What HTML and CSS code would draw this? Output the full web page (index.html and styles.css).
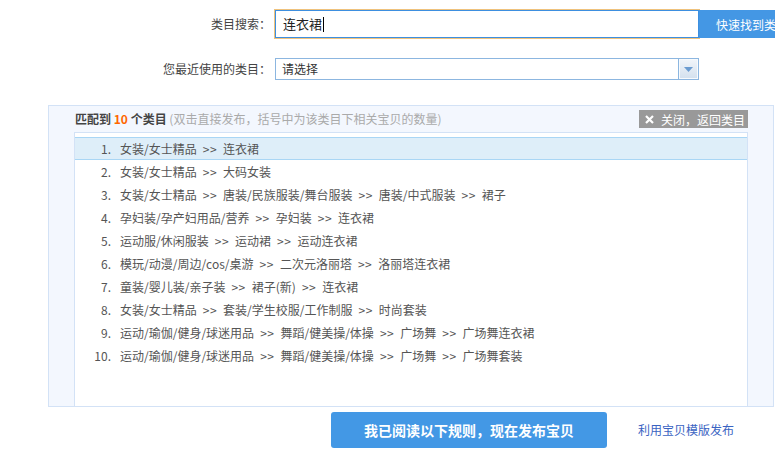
FILE: index.html
```html
<!DOCTYPE html>
<html lang="zh-CN">
<head>
<meta charset="utf-8">
<title>类目搜索</title>
<link rel="stylesheet" href="styles.css">
</head>
<body>
<div class="page">
  <div class="form-row search-row">
    <label class="label">类目搜索：</label>
    <div class="search-input"><span class="typed">连衣裙</span><span class="caret"></span></div>
    <button class="quick-btn">快速找到类目</button>
  </div>
  <div class="form-row recent-row">
    <label class="label">您最近使用的类目：</label>
    <div class="select">
      <span class="select-text">请选择</span>
      <span class="select-arrow"><svg width="9" height="5" viewBox="0 0 9 5"><path d="M0 0H9L4.5 5Z" fill="#6a9bd0"/></svg></span>
    </div>
  </div>

  <div class="panel">
    <div class="panel-head">
      <div class="head-text"><b>匹配到 <em>10</em> 个类目</b> <span class="hint">(双击直接发布，括号中为该类目下相关宝贝的数量)</span></div>
      <button class="close-btn"><svg width="9" height="9" viewBox="0 0 9 9"><path d="M1 1L8 8M8 1L1 8" stroke="#fff" stroke-width="2.2"/></svg><span>关闭，返回类目</span></button>
    </div>
    <ul class="list">
      <li class="item selected"><span class="num">1.</span><span>女装/女士精品<span class="sep">&gt;&gt;</span>连衣裙</span></li>
      <li class="item"><span class="num">2.</span><span>女装/女士精品<span class="sep">&gt;&gt;</span>大码女装</span></li>
      <li class="item"><span class="num">3.</span><span>女装/女士精品<span class="sep">&gt;&gt;</span>唐装/民族服装/舞台服装<span class="sep">&gt;&gt;</span>唐装/中式服装<span class="sep">&gt;&gt;</span>裙子</span></li>
      <li class="item"><span class="num">4.</span><span>孕妇装/孕产妇用品/营养<span class="sep">&gt;&gt;</span>孕妇装<span class="sep">&gt;&gt;</span>连衣裙</span></li>
      <li class="item"><span class="num">5.</span><span>运动服/休闲服装<span class="sep">&gt;&gt;</span>运动裙<span class="sep">&gt;&gt;</span>运动连衣裙</span></li>
      <li class="item"><span class="num">6.</span><span>模玩/动漫/周边/cos/桌游<span class="sep">&gt;&gt;</span>二次元洛丽塔<span class="sep">&gt;&gt;</span>洛丽塔连衣裙</span></li>
      <li class="item"><span class="num">7.</span><span>童装/婴儿装/亲子装<span class="sep">&gt;&gt;</span>裙子(新)<span class="sep">&gt;&gt;</span>连衣裙</span></li>
      <li class="item"><span class="num">8.</span><span>女装/女士精品<span class="sep">&gt;&gt;</span>套装/学生校服/工作制服<span class="sep">&gt;&gt;</span>时尚套装</span></li>
      <li class="item"><span class="num">9.</span><span>运动/瑜伽/健身/球迷用品<span class="sep">&gt;&gt;</span>舞蹈/健美操/体操<span class="sep">&gt;&gt;</span>广场舞<span class="sep">&gt;&gt;</span>广场舞连衣裙</span></li>
      <li class="item"><span class="num">10.</span><span>运动/瑜伽/健身/球迷用品<span class="sep">&gt;&gt;</span>舞蹈/健美操/体操<span class="sep">&gt;&gt;</span>广场舞<span class="sep">&gt;&gt;</span>广场舞套装</span></li>
    </ul>
  </div>

  <div class="actions">
    <button class="publish-btn">我已阅读以下规则，现在发布宝贝</button>
    <a class="tpl-link" href="#">利用宝贝模版发布</a>
  </div>
</div>
</body>
</html>
```

FILE: styles.css
```css
* { box-sizing: border-box; }
html, body { margin: 0; padding: 0; }
body {
  width: 775px;
  height: 465px;
  overflow: hidden;
  background: #fff;
  font-family: "Noto Sans CJK SC", "Microsoft YaHei", sans-serif;
  font-size: 12px;
  line-height: 1.5;
  color: #333;
}
.page { width: 775px; }
button { font-family: inherit; font-size: 12px; border: 0; cursor: pointer; padding: 0; }

.form-row { display: flex; align-items: center; }
.search-row { margin-top: 10px; height: 28px; }
.recent-row { margin-top: 20px; height: 22px; }
.label {
  width: 275px;
  flex: none;
  text-align: right;
  padding-right: 4px;
  color: #444;
}
.search-input {
  width: 424px;
  height: 28px;
  flex: none;
  border: 1px solid #3d8fe0;
  box-shadow: 0 0 0 1px #efc27c;
  padding-left: 7px;
  display: flex;
  align-items: center;
  font-size: 13px;
  color: #222;
  background: #fff;
}
.caret { width: 1px; height: 15px; background: #000; margin-left: 1px; }
.quick-btn {
  width: 76px;
  height: 28px;
  flex: none;
  background: #4497e4;
  color: #fff;
  text-align: left;
  padding-left: 17px;
  white-space: nowrap;
  overflow: hidden;
}
.select {
  width: 424px;
  height: 22px;
  flex: none;
  border: 1px solid #8cb6e0;
  display: flex;
  align-items: center;
  background: #fff;
}
.select-text { padding-left: 6px; color: #333; }
.select-arrow {
  margin-left: auto;
  width: 20px;
  height: 100%;
  border-left: 1px solid #8cb6e0;
  background: linear-gradient(#f1f5fa, #d3e0ee);
  display: flex;
  align-items: center;
  justify-content: center;
  box-shadow: inset 0 0 0 1px #f7fafd;
}

.panel {
  margin: 25px 0 0 48px;
  width: 726px;
  height: 302px;
  border: 1px solid #d3e2f6;
  background: #f3f7fe;
  padding: 0 25px;
  display: flex;
  flex-direction: column;
}
.panel-head {
  height: 26px;
  flex: none;
  display: flex;
  align-items: center;
  justify-content: space-between;
  padding-left: 1px;
}
.head-text { color: #333; white-space: nowrap; }
.head-text b { font-weight: bold; color: #444; }
.head-text em { font-style: normal; color: #f60; }
.hint { color: #aaa; }
.close-btn {
  height: 18px;
  background: #999;
  color: #fff;
  display: flex;
  align-items: center;
  gap: 7px;
  padding: 0 3px 0 6px;
  white-space: nowrap;
}
.list {
  list-style: none;
  margin: 0;
  padding: 4px 0 0;
  flex: 1;
  background: #fff;
  border: 1px solid #d3e2f6;
  border-bottom: 0;
}
.item {
  height: 23px;
  display: flex;
  align-items: center;
  border-top: 1px solid transparent;
  border-bottom: 1px solid transparent;
  color: #555;
  white-space: nowrap;
}
.item.selected {
  background: #deeef9;
  border-color: #a9d6f5;
}
.num { width: 36px; text-align: right; margin-right: 9px; flex: none; }
.sep { margin: 0 6px; letter-spacing: 0.5px; }

.actions {
  display: flex;
  align-items: center;
  margin-top: 5px;
  padding-left: 331px;
}
.publish-btn {
  width: 276px;
  height: 36px;
  border-radius: 3px;
  background: #4398e5;
  color: #fff;
  font-size: 14px;
  font-weight: bold;
}
.tpl-link {
  margin-left: 31px;
  color: #3a63c2;
  text-decoration: none;
}
```
